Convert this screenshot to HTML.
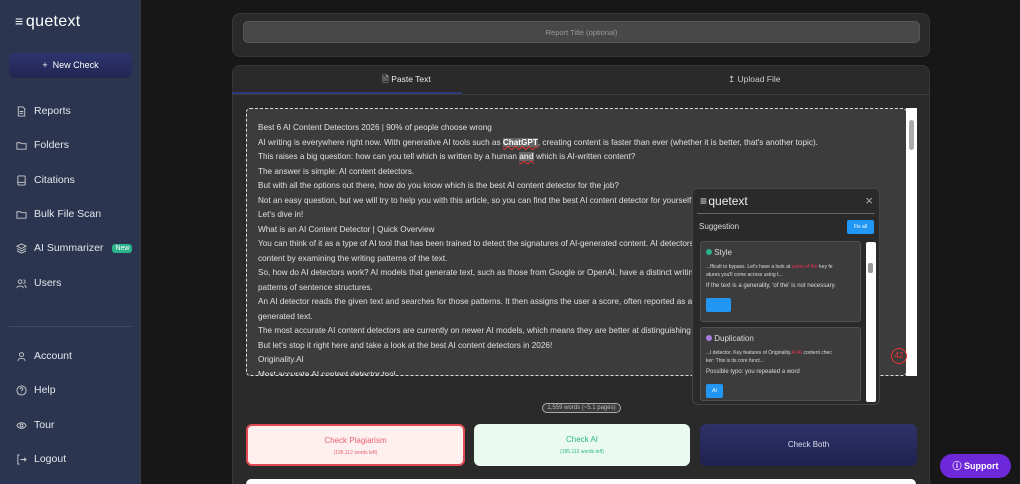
<!DOCTYPE html>
<html><head><style>
*{box-sizing:border-box;margin:0;padding:0}
html,body{width:1020px;height:484px;overflow:hidden}
body{background:#171717;font-family:"Liberation Sans",sans-serif;position:relative}
.sb{position:absolute;left:0;top:0;width:141px;height:484px;background:#2b3550;border-right:1px solid #3a3a3a}
.logo{position:absolute;left:15px;top:13px;color:#fff;font-size:16px;letter-spacing:.3px}
.nc{position:absolute;left:9px;top:53px;width:123px;height:25px;border-radius:6px;background:linear-gradient(#2e3470,#222650);color:#fff;font-size:9px;text-align:center;line-height:25px}
.it{position:absolute;left:16px;color:#e4e6ec;font-size:10.5px;display:flex;align-items:center;gap:7px}
.it svg{width:11px;height:11px}
.new{background:#2bb38b;color:#fff;font-size:7px;border-radius:3px;padding:1px 3px;margin-left:2px}
.sep{position:absolute;left:9px;top:326px;width:123px;border-top:1px solid #3f4965}
.card{position:absolute;background:#2a2a2a;border:1px solid #363636;border-radius:8px}
.ta{position:absolute;left:246px;top:108px;width:661px;height:268px;background:#3c3c3c;border:1px dashed #ddd;border-radius:4px;overflow:hidden;padding:12px 0 0 11px;color:#e0e0e0;font-size:8.2px;line-height:14.5px;white-space:nowrap}
.pop{position:absolute;left:692px;top:188px;width:188px;height:217px;background:#2a2a2a;border:1px solid #444;border-radius:6px}
.sc{position:absolute;background:#3c3c3c;border:1px solid #505050;border-radius:3px;color:#ddd}
.btn{position:absolute;top:424px;height:42px;border-radius:6px;text-align:center;font-size:8px}
</style></head><body>
<div class="sb">
<div class="logo"><span style="font-size:14px;letter-spacing:-2px">&#8801;</span> quetext</div>
<div class="nc">+&nbsp; New Check</div>
<div class="it" style="top:105px"><svg viewBox="0 0 12 12" fill="none" stroke="#ccc"><path d="M2.5 1h5l2 2v8h-7z M4 6h4M4 8h4"/></svg>Reports</div>
<div class="it" style="top:139px"><svg viewBox="0 0 12 12" fill="none" stroke="#ccc"><path d="M1 3h4l1 1h5v6H1z"/></svg>Folders</div>
<div class="it" style="top:174px"><svg viewBox="0 0 12 12" fill="none" stroke="#ccc"><rect x="2" y="1" width="8" height="10" rx="1"/><path d="M2 8h8"/></svg>Citations</div>
<div class="it" style="top:208px"><svg viewBox="0 0 12 12" fill="none" stroke="#ccc"><path d="M1 3h4l1 1h5v6H1z"/></svg>Bulk File Scan</div>
<div class="it" style="top:242px"><svg viewBox="0 0 12 12" fill="none" stroke="#ccc"><path d="M6 1l5 2.5-5 2.5-5-2.5zM1 6l5 2.5L11 6M1 8.5L6 11l5-2.5"/></svg>AI Summarizer <span class="new">New</span></div>
<div class="it" style="top:277px"><svg viewBox="0 0 12 12" fill="none" stroke="#ccc"><circle cx="4.5" cy="4" r="2"/><path d="M1 11c0-3 7-3 7 0M8 2a2 2 0 010 4M9 8c2 .5 2 2 2 3"/></svg>Users</div>
<div class="sep"></div>
<div class="it" style="top:350px"><svg viewBox="0 0 12 12" fill="none" stroke="#ccc"><circle cx="6" cy="4" r="2.2"/><path d="M2 11c0-4 8-4 8 0"/></svg>Account</div>
<div class="it" style="top:384px"><svg viewBox="0 0 12 12" fill="none" stroke="#ccc"><circle cx="6" cy="6" r="5"/><path d="M4.5 4.5a1.5 1.5 0 113 0c0 1-1.5 1-1.5 2.2M6 8.5v.5"/></svg>Help</div>
<div class="it" style="top:419px"><svg viewBox="0 0 12 12" fill="none" stroke="#ccc"><path d="M1 6c2-4 8-4 10 0-2 4-8 4-10 0z"/><circle cx="6" cy="6" r="1.6"/></svg>Tour</div>
<div class="it" style="top:453px"><svg viewBox="0 0 12 12" fill="none" stroke="#ccc"><path d="M4 1H2v10h2M5 6h6M9 4l2 2-2 2"/></svg>Logout</div>
</div>

<div class="card" style="left:232px;top:13px;width:698px;height:44px"></div>
<div style="position:absolute;left:243px;top:21px;width:677px;height:22px;background:#484848;border:1px solid #555;border-radius:5px;color:#999;font-size:7.5px;text-align:center;line-height:21px">Report Title (optional)</div>

<div class="card" style="left:232px;top:65px;width:698px;height:430px"></div>
<div style="position:absolute;left:232px;top:94px;width:698px;border-top:1px solid #3c3c3c"></div>
<div style="position:absolute;left:232px;top:92px;width:230px;height:2px;background:#2e3a7a"></div>
<div style="position:absolute;left:382px;top:74px;color:#eee;font-size:8.5px">&#128462; Paste Text</div>
<div style="position:absolute;left:728px;top:74px;color:#ccc;font-size:8.5px">&#8613; Upload File</div>

<div class="ta">
Best 6 AI Content Detectors 2026 | 90% of people choose wrong<br>
AI writing is everywhere right now. With generative AI tools such as <b style="color:#fff;background:#666;text-decoration:underline wavy #e33">ChatGPT</b>, creating content is faster than ever (whether it is better, that's another topic).<br>
This raises a big question: how can you tell which is written by a human <b style="background:#666;text-decoration:underline wavy #e33">and</b> which is AI-written content?<br>
The answer is simple: AI content detectors.<br>
But with all the options out there, how do you know which is the best AI content detector for the job?<br>
Not an easy question, but we will try to help you with this article, so you can find the best AI content detector for yourself now.<br>
Let's dive in!<br>
What is an AI Content Detector | Quick Overview<br>
You can think of it as a type of AI tool that has been trained to detect the signatures of AI-generated content. AI detectors analyze<br>
content by examining the writing patterns of the text.<br>
So, how do AI detectors work? AI models that generate text, such as those from Google or OpenAI, have a distinct writing style and<br>
patterns of sentence structures.<br>
An AI detector reads the given text and searches for those patterns. It then assigns the user a score, often reported as a percentage of<br>
generated text.<br>
The most accurate AI content detectors are currently on newer AI models, which means they are better at distinguishing between text.<br>
But let's stop it right here and take a look at the best AI content detectors in 2026!<br>
Originality.AI<br>
Most accurate AI content detector tool
</div>
<div style="position:absolute;left:906px;top:108px;width:11px;height:268px;background:#fff"></div>
<div style="position:absolute;left:909px;top:120px;width:5px;height:30px;background:#aaa;border-radius:3px"></div>
<div style="position:absolute;left:891px;top:348px;width:16px;height:16px;border:1px solid #e33;border-radius:50%;color:#e33;font-size:8px;text-align:center;line-height:14px">42</div>

<div class="pop">
<div style="position:absolute;left:7px;top:5px;color:#eee;font-size:12px"><span style="letter-spacing:-2px">&#8801;</span> quetext</div>
<div style="position:absolute;right:6px;top:4px;color:#aaa;font-size:13px">&#215;</div>
<div style="position:absolute;left:4px;top:24px;width:178px;border-top:1px solid #666"></div>
<div style="position:absolute;left:6px;top:33px;color:#ddd;font-size:8px">Suggestion</div>
<div style="position:absolute;left:154px;top:31px;width:27px;height:14px;background:#2196f3;border-radius:2px;color:#fff;font-size:5px;text-align:center;line-height:14px">Fix all</div>
<div style="position:absolute;left:173px;top:53px;width:10px;height:160px;background:#fff;border-radius:2px"></div>
<div style="position:absolute;left:175px;top:74px;width:5px;height:10px;background:#999;border-radius:2px"></div>
<div class="sc" style="left:7px;top:52px;width:161px;height:81px">
<div style="position:absolute;left:5px;top:6px;font-size:8px"><span style="display:inline-block;width:6px;height:6px;border-radius:50%;background:#2bb38b"></span> Style</div>
<div style="position:absolute;left:5px;top:21px;font-size:5px;line-height:8px">...fficult to bypass. Let's have a look at <span style="color:#e35">some of the</span> key fe<br>atures you'll come across using t...</div>
<div style="position:absolute;left:5px;top:41px;font-size:6px">If the text is a generality, 'of the' is not necessary.</div>
<div style="position:absolute;left:5px;top:56px;width:25px;height:14px;background:#2196f3;border-radius:2px"></div>
</div>
<div class="sc" style="left:7px;top:138px;width:161px;height:74px">
<div style="position:absolute;left:5px;top:6px;font-size:8px"><span style="display:inline-block;width:6px;height:6px;border-radius:50%;background:#a97de0"></span> Duplication</div>
<div style="position:absolute;left:5px;top:21px;font-size:5px;line-height:8px">...l detector. Key features of Originality.<span style="color:#e35">AI AI</span> content chec<br>ker: This is its core funct...</div>
<div style="position:absolute;left:5px;top:41px;font-size:6px">Possible typo: you repeated a word</div>
<div style="position:absolute;left:5px;top:56px;width:17px;height:14px;background:#2196f3;border-radius:2px;color:#fff;font-size:5px;text-align:center;line-height:14px">AI</div>
</div>
</div>

<div style="position:absolute;left:542px;top:403px;width:79px;height:10px;background:#3a3a3a;border:1px solid #aaa;border-radius:5px;color:#bbb;font-size:6px;text-align:center;line-height:8px">1,559 words (~5.1 pages)</div>

<div class="btn" style="left:246px;width:219px;background:#fff0f0;border:2px solid #e04a55;color:#e56070"><div style="margin-top:10px">Check Plagiarism</div><div style="font-size:5px;margin-top:5px">(195,112 words left)</div></div>
<div class="btn" style="left:474px;width:216px;background:#eafaf1;color:#2bb38b"><div style="margin-top:11px">Check AI</div><div style="font-size:5px;margin-top:5px">(195,112 words left)</div></div>
<div class="btn" style="left:700px;width:217px;background:linear-gradient(#2e3268,#1f2250);color:#dde;line-height:42px">Check Both</div>
<div style="position:absolute;left:246px;top:479px;width:670px;height:10px;background:#fff;border-radius:6px"></div>

<div style="position:absolute;left:940px;top:454px;width:71px;height:24px;background:#6d28d9;border-radius:12px;color:#fff;font-size:9px;font-weight:bold;line-height:24px;text-align:center">&#9432; Support</div>
</body></html>
